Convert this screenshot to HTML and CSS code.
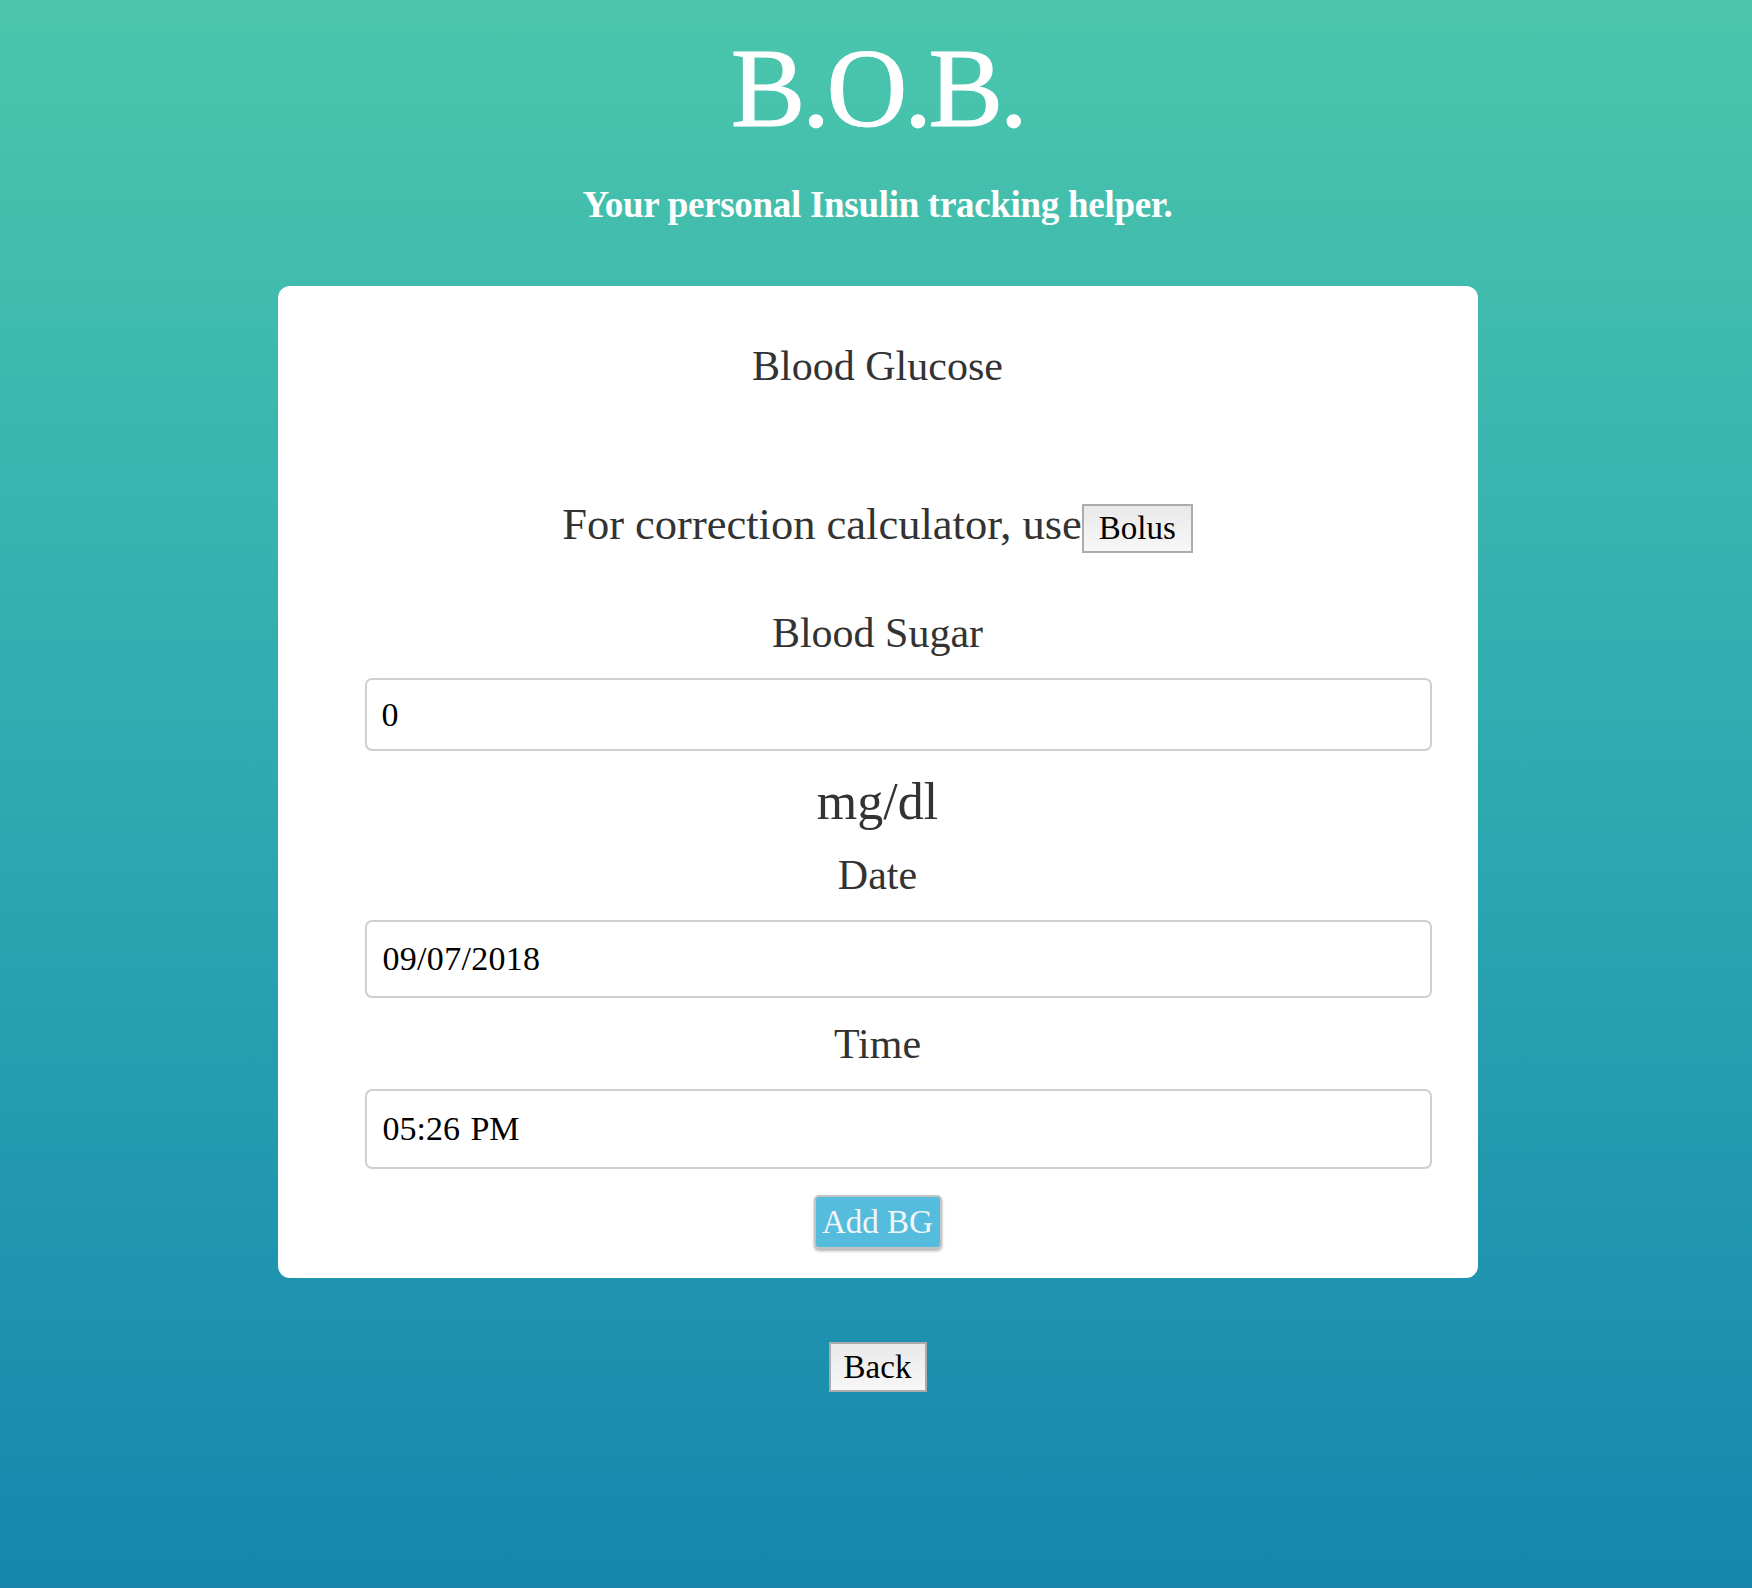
FILE: index.html
```html
<!DOCTYPE html>
<html lang="en">
<head>
<meta charset="utf-8">
<title>B.O.B.</title>
<link rel="stylesheet" href="styles.css">
</head>
<body>
<div class="page">
  <h1 class="title">B.O.B.</h1>
  <p class="subtitle">Your personal Insulin tracking helper.</p>
  <div class="card">
    <div class="label">Blood Glucose</div>
    <div class="correction">
      <span class="correction-text">For correction calculator, use</span>
      <button class="btn-plain">Bolus</button>
    </div>
    <div class="label label-sugar">Blood Sugar</div>
    <input class="field field-bg" type="text" value="0">
    <div class="unit">mg/dl</div>
    <div class="label label-date">Date</div>
    <input class="field field-date" type="text" value="09/07/2018">
    <div class="label label-time">Time</div>
    <input class="field field-time" type="text" value="05:26 PM">
    <div class="actions">
      <button class="btn-add">Add BG</button>
    </div>
  </div>
  <div class="back-row">
    <button class="btn-plain btn-back">Back</button>
  </div>
</div>
</body>
</html>
```
FILE: styles.css
```css
html, body {
  margin: 0;
  padding: 0;
}
body {
  min-height: 1588px;
  background: linear-gradient(to bottom, #4bc6ac 0%, #2ea9b1 50%, #1686ad 100%);
  font-family: "Liberation Serif", "Times New Roman", serif;
  color: #333;
}
.page {
  padding-top: 28px;
  padding-left: 3px;
  display: flex;
  flex-direction: column;
  align-items: center;
}
.title {
  margin: 0;
  font-size: 112px;
  line-height: 120px;
  font-weight: normal;
  letter-spacing: -3.5px;
  color: #fff;
  -webkit-text-stroke: 1px #fff;
}
.subtitle {
  margin: 36px 0 0;
  font-size: 37px;
  line-height: 42px;
  font-weight: bold;
  letter-spacing: -0.3px;
  color: #fff;
}
.card {
  box-sizing: border-box;
  width: 1200px;
  margin-top: 60px;
  padding: 56px 0 29px;
  background: #fff;
  border-radius: 12px;
  display: flex;
  flex-direction: column;
}
.label {
  font-size: 42px;
  line-height: 48px;
  text-align: center;
}
.correction {
  margin-top: 110px;
  display: flex;
  justify-content: center;
  align-items: baseline;
}
.correction-text {
  font-size: 44.5px;
  line-height: 48px;
}
.btn-plain {
  font-family: "Liberation Serif", "Times New Roman", serif;
  font-size: 33px;
  line-height: 39px;
  padding: 3px 15px;
  border: 2px solid #acacac;
  border-radius: 0;
  background: linear-gradient(to bottom, #e9e9e9, #f7f7f7);
  color: #000;
}
.label-sugar {
  margin-top: 56px;
}
.field {
  box-sizing: border-box;
  display: block;
  margin-left: 87px;
  width: 1067px;
  padding: 0 15px;
  border: 2px solid #cfcfcf;
  border-radius: 7px;
  background: #fff;
  font-family: "Liberation Serif", "Times New Roman", serif;
  font-size: 34px;
  color: #000;
  outline: none;
}
.field-bg {
  margin-top: 21px;
  height: 73px;
}
.unit {
  margin-top: 22px;
  font-size: 52px;
  line-height: 58px;
  text-align: center;
}
.label-date {
  margin-top: 20px;
}
.field-date {
  margin-top: 21px;
  height: 78px;
  padding-left: 16px;
  letter-spacing: 0.3px;
}
.label-time {
  margin-top: 22px;
}
.field-time {
  margin-top: 21px;
  height: 80px;
  padding-left: 16px;
  word-spacing: 2px;
}
.actions {
  margin-top: 26px;
  display: flex;
  justify-content: center;
}
.btn-add {
  box-sizing: border-box;
  width: 128px;
  height: 54px;
  padding: 0;
  font-family: "Liberation Serif", "Times New Roman", serif;
  font-size: 33px;
  line-height: 48px;
  color: #f3f6f7;
  background: #56bcdd;
  border: 2px solid #c4c4c4;
  border-radius: 5px;
  box-shadow: 0 2px 3px rgba(0, 0, 0, 0.3);
}
.back-row {
  margin-top: 64px;
  display: flex;
  justify-content: center;
}
.btn-back {
  box-sizing: border-box;
  width: 98px;
  height: 50px;
  padding: 0;
  line-height: 44px;
}
```
